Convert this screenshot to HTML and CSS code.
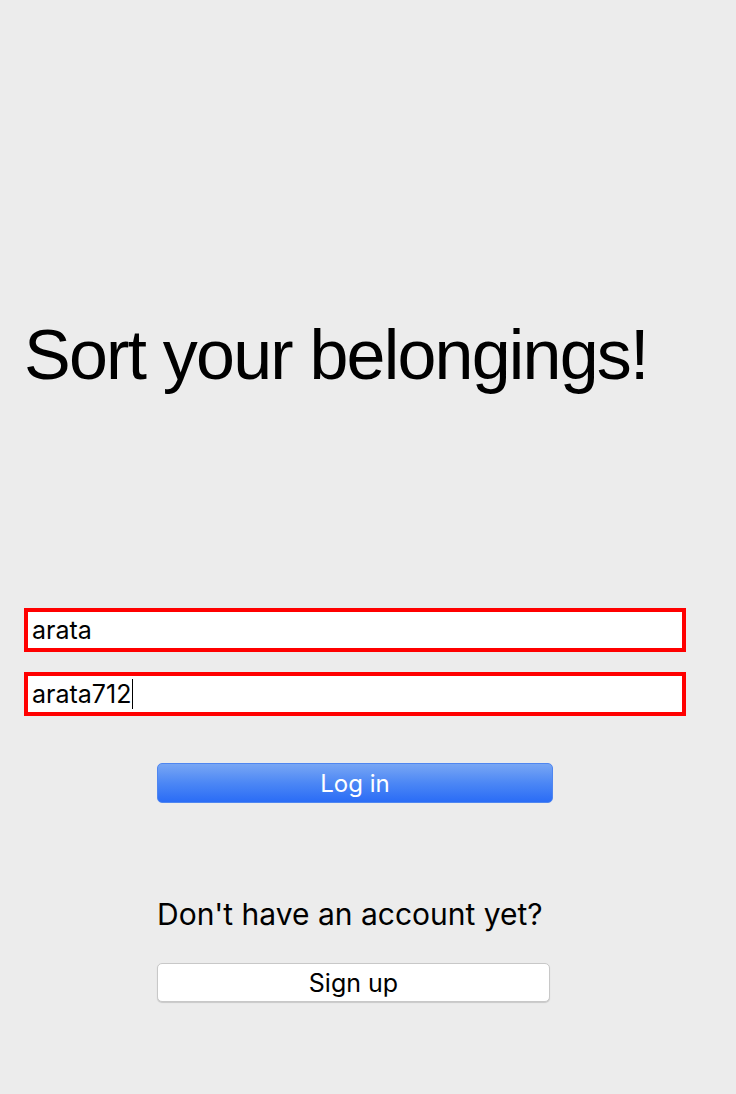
FILE: index.html
```html
<!DOCTYPE html>
<html lang="en">
<head>
<meta charset="utf-8">
<title>Sort your belongings!</title>
<link rel="stylesheet" href="styles.css">
</head>
<body>
<main class="page">
  <h1 class="title">Sort your belongings!</h1>
  <form class="login">
    <div class="field">arata</div>
    <div class="field">arata712<span class="caret"></span></div>
    <button type="button" class="btn btn-primary">Log in</button>
  </form>
  <section class="signup">
    <p class="prompt">Don't have an account yet?</p>
    <button type="button" class="btn btn-secondary">Sign up</button>
  </section>
</main>
</body>
</html>
```

FILE: styles.css
```css
html, body {
  margin: 0;
  padding: 0;
  background: #ececec;
}

.page {
  box-sizing: border-box;
  width: 736px;
  height: 1094px;
  padding: 315px 50px 0 24px;
  font-family: Inter, "Liberation Sans", sans-serif;
  color: #000;
}

.title {
  margin: 0;
  font-family: "Liberation Sans", Arial, sans-serif;
  font-weight: 400;
  font-size: 70px;
  line-height: 80px;
  letter-spacing: -1.8px;
}

.login {
  margin: 213px 0 0;
  display: flex;
  flex-direction: column;
}

.field {
  box-sizing: border-box;
  width: 662px;
  height: 44px;
  border: 4px solid #ff0000;
  background: #fff;
  padding: 0 4px;
  display: flex;
  align-items: center;
  font-size: 25px;
  line-height: 1;
}

.field + .field {
  margin-top: 20px;
}

.caret {
  display: inline-block;
  width: 1px;
  height: 30px;
  background: #000;
  margin-left: 1px;
}

.btn {
  box-sizing: border-box;
  font-family: Inter, "Liberation Sans", sans-serif;
  font-size: 24px;
  padding: 0;
  border-radius: 5px;
  margin-left: 133px;
}

.btn-primary {
  width: 396px;
  height: 40px;
  margin-top: 47px;
  border: 1px solid #4f86f0;
  background: linear-gradient(to bottom, #78a6f4 0%, #4c87f5 50%, #2a6cf6 100%);
  color: #fff;
}

.signup {
  display: flex;
  flex-direction: column;
  align-items: flex-start;
}

.prompt {
  margin: 93px 0 0 133px;
  font-size: 30px;
  line-height: 36px;
}

.btn-secondary {
  width: 393px;
  height: 39px;
  margin-top: 31px;
  border: 1px solid #c8c8c8;
  background: #fff;
  color: #000;
  font-size: 25px;
  box-shadow: 0 1px 1px rgba(0, 0, 0, 0.15);
}
```
